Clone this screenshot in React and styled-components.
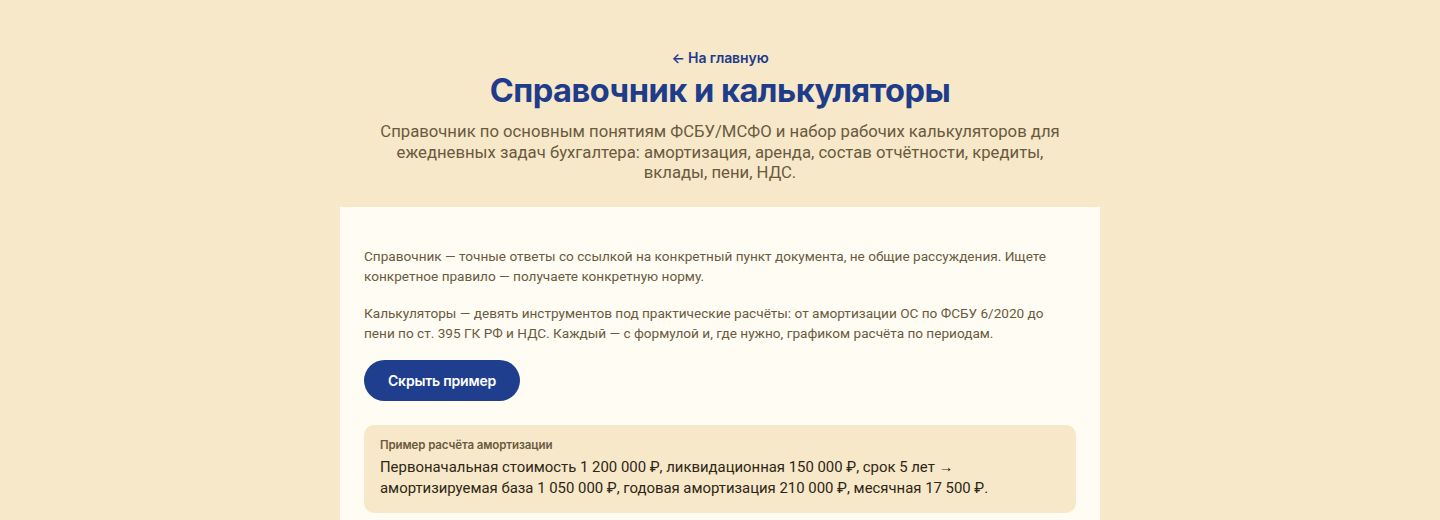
import React from "react";
import styled, { createGlobalStyle } from "styled-components";

const Global = createGlobalStyle`
  html, body { margin: 0; padding: 0; }
  body {
    background: #f6e8c9;
    font-family: Roboto, "Noto Sans", sans-serif;
    -webkit-font-smoothing: antialiased;
  }
`;

const Page = styled.main`
  display: flex;
  flex-direction: column;
  align-items: center;
  padding-top: 48px;
`;

const Header = styled.header`
  display: flex;
  flex-direction: column;
  align-items: center;
  text-align: center;
  width: 700px;
`;

const BackLink = styled.a`
  font-family: Inter, "Noto Sans", sans-serif;
  font-weight: 600;
  font-size: 14px;
  line-height: 20px;
  color: #1f3c8a;
  text-decoration: none;
  letter-spacing: -0.1px;
`;

const Title = styled.h1`
  margin: 2px 0 0;
  font-family: Inter, "Noto Sans", sans-serif;
  font-weight: 700;
  font-size: 32.6px;
  line-height: 40px;
  letter-spacing: -0.5px;
  color: #1f3c8a;
`;

const Lead = styled.p`
  margin: 12px 0 0;
  font-size: 16.7px;
  line-height: 20.5px;
  color: #6a5a3e;
`;

const Card = styled.section`
  box-sizing: border-box;
  width: 760px;
  margin-top: 23px;
  background: #fffcf3;
  padding: 39px 24px 24px;
  display: flex;
  flex-direction: column;
  align-items: flex-start;
`;

const Text = styled.p`
  margin: 0 0 17px;
  font-size: 13.6px;
  line-height: 20px;
  color: #6a5a3e;
`;

const Button = styled.button`
  height: 41px;
  padding: 0 24px;
  border: none;
  border-radius: 21px;
  background: #1f3f8e;
  color: #ffffff;
  font-family: Inter, "Noto Sans", sans-serif;
  font-weight: 600;
  font-size: 14px;
  letter-spacing: -0.2px;
  cursor: pointer;
`;

const Example = styled.div`
  box-sizing: border-box;
  align-self: stretch;
  margin-top: 24px;
  background: #f6e8c9;
  border-radius: 10px;
  padding: 12px 16px 14px;
`;

const ExampleLabel = styled.div`
  font-family: Inter, "Noto Sans", sans-serif;
  font-weight: 600;
  font-size: 11.5px;
  line-height: 16px;
  color: #6a5a3e;
  letter-spacing: -0.1px;
`;

const ExampleText = styled.div`
  margin-top: 4px;
  font-size: 14.9px;
  line-height: 21px;
  color: #2e2616;
`;

export default function App() {
  return (
    <>
      <Global />
      <Page>
        <Header>
          <BackLink href="#">← На главную</BackLink>
          <Title>Справочник и калькуляторы</Title>
          <Lead>
            Справочник по основным понятиям ФСБУ/МСФО и набор рабочих калькуляторов для
            <br />
            ежедневных задач бухгалтера: амортизация, аренда, состав отчётности, кредиты,
            <br />
            вклады, пени, НДС.
          </Lead>
        </Header>
        <Card>
          <Text>
            Справочник — точные ответы со ссылкой на конкретный пункт документа, не общие рассуждения. Ищете
            <br />
            конкретное правило — получаете конкретную норму.
          </Text>
          <Text>
            Калькуляторы — девять инструментов под практические расчёты: от амортизации ОС по ФСБУ 6/2020 до
            <br />
            пени по ст. 395 ГК РФ и НДС. Каждый — с формулой и, где нужно, графиком расчёта по периодам.
          </Text>
          <Button>Скрыть пример</Button>
          <Example>
            <ExampleLabel>Пример расчёта амортизации</ExampleLabel>
            <ExampleText>
              Первоначальная стоимость 1 200 000 ₽, ликвидационная 150 000 ₽, срок 5 лет →
              <br />
              амортизируемая база 1 050 000 ₽, годовая амортизация 210 000 ₽, месячная 17 500 ₽.
            </ExampleText>
          </Example>
        </Card>
      </Page>
    </>
  );
}
